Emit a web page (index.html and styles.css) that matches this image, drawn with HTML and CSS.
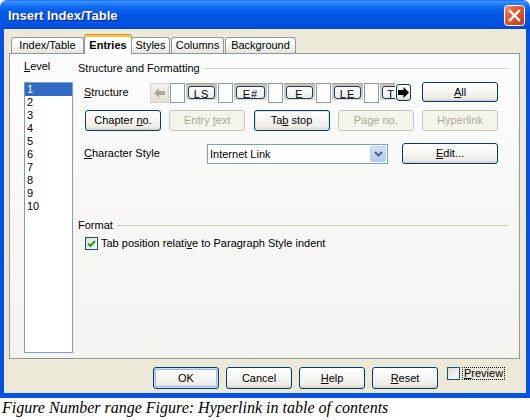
FILE: index.html
```html
<!DOCTYPE html>
<html>
<head>
<meta charset="utf-8">
<title>Insert Index/Table</title>
<link rel="stylesheet" href="styles.css">
</head>
<body>
<div class="window">
  <div class="titlebar">
    <span class="title">Insert Index/Table</span>
    <svg class="close" width="21" height="21" viewBox="0 0 21 21">
      <defs>
        <linearGradient id="cg" x1="0" y1="0" x2="1" y2="1">
          <stop offset="0" stop-color="#F3A086"/>
          <stop offset="0.35" stop-color="#E2603C"/>
          <stop offset="1" stop-color="#C03810"/>
        </linearGradient>
      </defs>
      <rect x="0.5" y="0.5" width="20" height="20" rx="3" fill="url(#cg)" stroke="#FFFFFF"/>
      <path d="M6 6 L15 15 M15 6 L6 15" stroke="#FFFFFF" stroke-width="2.4" stroke-linecap="square"/>
    </svg>
  </div>
  <div class="frame">
    <div class="tabs">
      <div class="tab t1">Index/Table</div>
      <div class="tab t2 active">Entries</div>
      <div class="tab t3">Styles</div>
      <div class="tab t4">Columns</div>
      <div class="tab t5">Background</div>
    </div>
    <div class="panel">
      <div class="level">
        <div class="label"><u>L</u>evel</div>
        <div class="listbox">
          <div class="item sel">1</div>
          <div class="item">2</div>
          <div class="item">3</div>
          <div class="item">4</div>
          <div class="item">5</div>
          <div class="item">6</div>
          <div class="item">7</div>
          <div class="item">8</div>
          <div class="item">9</div>
          <div class="item">10</div>
        </div>
      </div>
      <div class="main">
        <div class="heading"><span>Structure and Formatting</span><span class="rule"></span></div>
        <div class="row structure">
          <span class="lab lab-struct"><u>S</u>tructure</span>
          <span class="arrow-btn left">
            <svg width="11" height="10" viewBox="0 0 11 10"><polygon points="0,5 5,0 5,3 11,3 11,7 5,7 5,10" fill="#ACA899"/></svg>
          </span>
          <div class="strip">
            <span class="slot"></span>
            <span class="token"><span class="tbtn">LS</span></span>
            <span class="slot"></span>
            <span class="token wide"><span class="tbtn">E#</span></span>
            <span class="slot"></span>
            <span class="token"><span class="tbtn">E</span></span>
            <span class="slot"></span>
            <span class="token"><span class="tbtn">LE</span></span>
            <span class="slot"></span>
            <span class="token narrow"><span class="tbtn">T</span></span>
          </div>
          <span class="arrow-btn right">
            <svg width="11" height="11" viewBox="0 0 11 11"><polygon points="11,5.5 5.5,0 5.5,3 0,3 0,8 5.5,8 5.5,11" fill="#000000"/></svg>
          </span>
          <button class="btn all"><u>A</u>ll</button>
        </div>
        <div class="row buttons">
          <button class="btn">Chapter <u>n</u>o.</button>
          <button class="btn disabled">Entry <u>t</u>ext</button>
          <button class="btn focus">Ta<u>b</u> stop</button>
          <button class="btn disabled">Page no.</button>
          <button class="btn disabled">Hyperlink</button>
        </div>
        <div class="row charstyle">
          <span class="lab lab-char"><u>C</u>haracter Style</span>
          <div class="combo">
            <span class="combo-text">Internet Link</span>
            <span class="combo-btn">
              <svg width="9" height="6" viewBox="0 0 9 6"><polyline points="1,1 4.5,4.5 8,1" fill="none" stroke="#4D6185" stroke-width="2"/></svg>
            </span>
          </div>
          <button class="btn edit"><u>E</u>dit...</button>
        </div>
        <div class="heading format"><span>Format</span><span class="rule"></span></div>
        <div class="row check">
          <span class="checkbox">
            <svg width="11" height="11" viewBox="0 0 11 11"><polyline points="2,5.5 4.5,8 9,3" fill="none" stroke="#21A121" stroke-width="2"/></svg>
          </span>
          <span class="check-text">Tab position relati<u>v</u>e to Paragraph Style indent</span>
        </div>
      </div>
    </div>
    <div class="footer">
      <button class="btn fbtn default">OK</button>
      <button class="btn fbtn">Cancel</button>
      <button class="btn fbtn"><u>H</u>elp</button>
      <button class="btn fbtn"><u>R</u>eset</button>
      <span class="preview">
        <span class="checkbox empty"></span>
        <span class="preview-text"><u>P</u>review</span>
      </span>
    </div>
  </div>
</div>
<p class="caption">Figure Number range Figure: Hyperlink in table of contents</p>
</body>
</html>
```

FILE: styles.css
```css
* { box-sizing: border-box; }

body {
  margin: 0;
  background: #FFFFFF;
  font-family: "Liberation Sans", Arial, sans-serif;
  font-size: 11px;
  color: #000000;
}

u { text-decoration: underline; text-underline-offset: 1px; }

.window { width: 530px; }

.titlebar {
  height: 29px;
  display: flex;
  align-items: center;
  justify-content: space-between;
  padding: 0 5px 0 8px;
  border-radius: 7px 7px 0 0;
  background: linear-gradient(to bottom,
    #0058EE 0px, #3D95FF 1px, #2E86FD 3px, #1570F5 6px, #0860EB 10px,
    #0054E3 16px, #0055E5 22px, #0050DC 26px, #0045D0 29px);
}

.title {
  color: #FFFFFF;
  font-weight: bold;
  font-size: 13px;
  text-shadow: 1px 1px 0 #0F1E8E;
  margin-top: 1px;
}

.close { display: block; margin-top: 1px; }

.frame {
  background: #ECE9D8;
  border: 4px solid #0751E6;
  border-top: 0;
  border-bottom-width: 5px;
  padding: 5px 6px 4px 5px;
}

/* tabs */
.tabs {
  display: flex;
  align-items: flex-end;
  height: 19px;
  padding-left: 2px;
}

.tab {
  height: 16px;
  margin-right: 1px;
  border: 1px solid #919B9C;
  border-bottom: 0;
  border-radius: 3px 3px 0 0;
  background: linear-gradient(#FFFFFF, #F7F7F4 50%, #E5E4DC);
  text-align: center;
  line-height: 15px;
  white-space: nowrap;
}

.t1 { width: 73px; }
.t2 { width: 48px; }
.t3 { width: 39px; }
.t4 { width: 53px; }
.t5 { width: 71px; }

.tab.active {
  position: relative;
  z-index: 1;
  height: 20px;
  margin: 0 -1px -1px -1px;
  border-top: 1px solid #E68B2C;
  box-shadow: inset 0 2px 0 #FFC83C;
  background: #FCFCFE;
  font-weight: bold;
  padding-top: 2px;
  line-height: 16px;
}

/* panel */
.panel {
  height: 306px;
  border: 1px solid #919B9C;
  background: linear-gradient(#FCFCFE, #F4F3EE);
  display: flex;
}

.level {
  width: 63px;
  padding: 6px 0 0 14px;
}

.label { line-height: 13px; height: 13px; }

.listbox {
  margin-top: 9px;
  height: 271px;
  border: 1px solid #7F9DB9;
  background: #FFFFFF;
}

.item {
  height: 13px;
  line-height: 13px;
  padding-left: 2px;
}

.item.sel { background: #316AC5; color: #FFFFFF; }

.main {
  flex: 1;
  margin-left: 5px;
  padding: 8px 11px 0 0;
}

.heading {
  display: flex;
  align-items: center;
  height: 13px;
  line-height: 13px;
  white-space: nowrap;
}

.rule {
  flex: 1;
  height: 0;
  border-top: 1px solid #D0D0BF;
  margin-left: 5px;
}

.row { display: flex; }

.lab { line-height: 21px; white-space: nowrap; }

.structure {
  margin-top: 7px;
  height: 21px;
  padding-left: 6px;
  align-items: flex-start;
}

.lab-struct { width: 66px; }

.arrow-btn {
  display: flex;
  align-items: center;
  justify-content: center;
}

.arrow-btn.left {
  width: 19px;
  height: 20px;
  margin-top: 1px;
  border: 1px solid #D5D2C6;
  background: linear-gradient(#F2F1EC, #E2DFD4);
}

.arrow-btn.right {
  width: 15px;
  height: 17px;
  margin: 2px 0 0 1px;
  border: 1px solid #003C74;
  border-radius: 3px;
  background: linear-gradient(#FFFFFF, #ECEBE6 85%, #D6D0C5);
}

.strip {
  width: 225px;
  height: 20px;
  margin: 1px 0 0 1px;
  display: flex;
  align-items: flex-start;
  overflow: hidden;
}

.slot {
  flex: none;
  width: 15px;
  height: 20px;
  margin-right: 1px;
  border: 1px solid #7F9DB9;
  background: #FFFFFF;
}

.token {
  flex: none;
  width: 31px;
  height: 17px;
  margin-right: 1px;
  padding: 3px 2px 1px 2px;
  background: linear-gradient(#C4C1B8, #DBD8D0);
  border-top: 1px solid #A6A398;
}

.token.wide { width: 33px; }
.token.narrow { width: 22px; }

.tbtn {
  display: block;
  height: 13px;
  margin-top: -1px;
  border: 1px solid #1F3A66;
  border-radius: 3px;
  background: linear-gradient(#FFFFFF, #ECEBE6);
  text-align: center;
  line-height: 15px;
  letter-spacing: 1px;
  overflow: hidden;
}

.btn {
  font: inherit;
  color: #000000;
  height: 21px;
  padding: 0;
  border: 1px solid #003C74;
  border-radius: 3px;
  background: linear-gradient(#FFFFFF 0%, #F7F7F4 40%, #ECEBE6 85%, #D6D0C5 100%);
  text-align: center;
  line-height: 19px;
  white-space: nowrap;
}

.btn.disabled {
  border-color: #C9C7BA;
  color: #ACA899;
  background: #F5F4EA;
}

.btn.focus { box-shadow: inset 0 0 0 1px #E8E6DC; }

.btn.default { box-shadow: inset 0 0 0 1px #CEDDF8, inset 0 0 0 2px #9DBAEC; }

.all {
  width: 76px;
  height: 20px;
  margin-left: 11px;
}

.buttons {
  margin-top: 7px;
  padding: 0 10px 0 7px;
  justify-content: space-between;
}

.buttons .btn { width: 76px; }

.charstyle {
  margin-top: 12px;
  height: 21px;
  padding-left: 6px;
  align-items: flex-start;
}

.lab-char { width: 123px; }

.combo {
  width: 181px;
  height: 20px;
  margin-top: 1px;
  border: 1px solid #7F9DB9;
  background: #FFFFFF;
  display: flex;
  align-items: center;
  justify-content: space-between;
}

.combo-text { padding-left: 2px; }

.combo-btn {
  width: 16px;
  height: 16px;
  margin-right: 1px;
  border: 1px solid #B9CDF6;
  border-radius: 2px;
  background: linear-gradient(#D4E0FB, #B5C9F6);
  display: flex;
  align-items: center;
  justify-content: center;
}

.edit {
  width: 96px;
  margin-left: 14px;
}

.format { margin-top: 55px; }

.format .rule { margin-left: 4px; }

.check {
  margin-top: 5px;
  height: 13px;
  padding-left: 7px;
  align-items: center;
}

.checkbox {
  width: 13px;
  height: 13px;
  border: 1px solid #1C5180;
  background: linear-gradient(135deg, #DCDCD7, #FFFFFF);
  display: flex;
  align-items: center;
  justify-content: center;
  flex: none;
}

.check-text { margin-left: 3px; line-height: 13px; }

/* footer */
.footer {
  margin-top: 8px;
  height: 22px;
  padding-left: 144px;
  display: flex;
  align-items: flex-start;
}

.fbtn {
  width: 66px;
  height: 22px;
  line-height: 20px;
  margin-right: 7px;
}

.preview {
  display: flex;
  align-items: center;
  margin-left: 2px;
}

.preview-text {
  margin-left: 2px;
  padding: 0 1px;
  line-height: 11px;
  border: 1px dotted #000000;
}

.caption {
  margin: 0;
  padding: 1px 0 0 2px;
  font-family: "Liberation Serif", "Times New Roman", serif;
  font-style: italic;
  font-size: 16px;
  line-height: 18px;
}
```
